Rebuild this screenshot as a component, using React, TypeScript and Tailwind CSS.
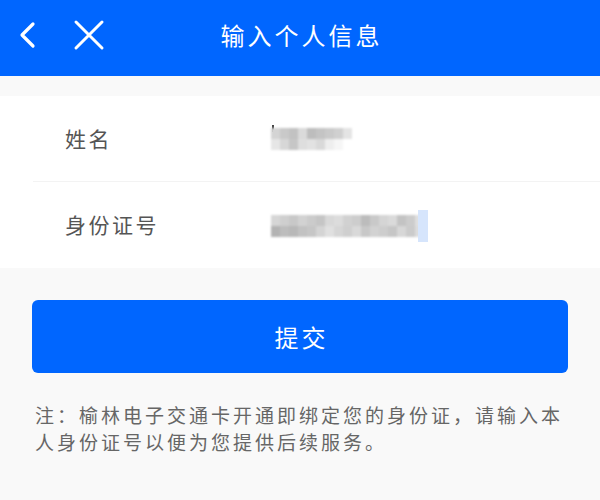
import React from "react";

const FONT = '"Noto Sans CJK SC", "Noto Sans", sans-serif';

const nameTop = ["bg-[#d4d4d4]", "bg-[#c9c9c9]", "bg-[#c2c2c2]", "bg-[#dadada]", "bg-[#bdbdbd]", "bg-[#c4c4c4]", "bg-[#cacaca]", "bg-[#d0d0d0]", "bg-[#e4e4e4]"];
const nameBot = ["bg-[#e6e6e6]", "bg-[#d7d7d7]", "bg-[#c6c6c6]", "bg-[#dedede]", "bg-[#e2e2e2]", "bg-[#d9d9d9]", "bg-[#eeeeee]", "bg-[#f6f6f6]", "bg-white"];

const idTop = ["bg-[#d6d6d6]", "bg-[#cfcfcf]", "bg-[#c8c8c8]", "bg-[#d2d2d2]", "bg-[#cbcbcb]", "bg-[#c5c5c5]", "bg-[#d8d8d8]", "bg-[#dcdcdc]", "bg-[#d1d1d1]", "bg-[#cdcdcd]", "bg-[#bcbcbc]", "bg-[#c9c9c9]", "bg-[#d5d5d5]", "bg-[#dadada]", "bg-[#c3c3c3]", "bg-[#cccccc]", "bg-[#dfdfdf]"];
const idBot = ["bg-[#b3b3b3]", "bg-[#bdbdbd]", "bg-[#b8b8b8]", "bg-[#c2c2c2]", "bg-[#c6c6c6]", "bg-[#d4d4d4]", "bg-[#e0e0e0]", "bg-[#d6d6d6]", "bg-[#cfcfcf]", "bg-[#d9d9d9]", "bg-[#c8c8c8]", "bg-[#d2d2d2]", "bg-[#cdcdcd]", "bg-[#c6c6c6]", "bg-[#d7d7d7]", "bg-[#cbcbcb]", "bg-[#dcdcdc]"];

function Mosaic({ top, bot }: { top: string[]; bot: string[] }) {
  return (
    <div className="flex flex-col blur-[1px]">
      <div className="flex">
        {top.map((c, i) => (
          <div key={i} className={`w-[9px] h-[11px] ${c}`} />
        ))}
      </div>
      <div className="flex">
        {bot.map((c, i) => (
          <div key={i} className={`w-[9px] h-[11px] ${c}`} />
        ))}
      </div>
    </div>
  );
}

export default function App() {
  return (
    <div className="w-[600px] h-[500px] bg-[#f9f9f9] overflow-hidden" style={{ fontFamily: FONT }}>
      <div className="h-[76px] bg-[#0066ff] grid grid-cols-[1fr_auto_1fr] items-center">
        <div className="flex items-center pl-[19px] gap-[36px] pb-[6px]">
          <svg width="18" height="28" viewBox="0 0 18 28" fill="none">
            <path d="M14 3 L3 14 L14 25" stroke="white" strokeWidth="3.2" strokeLinecap="round" strokeLinejoin="round" />
          </svg>
          <svg width="32" height="32" viewBox="0 0 32 32" fill="none">
            <path d="M3 3 L29 29 M29 3 L3 29" stroke="white" strokeWidth="3" strokeLinecap="round" />
          </svg>
        </div>
        <div className="text-white text-[24px] tracking-[3px] pb-[6px] pl-[3px] leading-none">输入个人信息</div>
        <div />
      </div>

      <div className="mt-[20px] bg-white">
        <div className="h-[85px] flex items-center">
          <div className="w-[271px] pl-[65px] text-[21px] tracking-[2.5px] text-[#555555]">姓名</div>
          <div className="relative">
            <div className="absolute left-[1px] -top-[3px] w-[2px] h-[7px] bg-[#444444] blur-[0.4px]" />
            <Mosaic top={nameTop} bot={nameBot} />
          </div>
        </div>
        <div className="ml-[33px] h-px bg-[#f3f3f3]" />
        <div className="h-[86px] flex items-center">
          <div className="w-[271px] pl-[65px] text-[21px] tracking-[2.5px] text-[#555555]">身份证号</div>
          <div className="flex items-center pt-[2px]">
            <Mosaic top={idTop} bot={idBot} />
            <div className="w-[10px] h-[32px] bg-[#d6e5fc] -ml-[6px] blur-[0.5px]" />
          </div>
        </div>
      </div>

      <div className="mx-[32px] mt-[32px] h-[73px] rounded-[6px] bg-[#0066ff] flex items-center justify-center">
        <span className="text-white text-[24px] tracking-[3px] pl-[3px]">提交</span>
      </div>

      <div className="mt-[28px] px-[35px] text-[19px] leading-[27px] tracking-[3px] text-[#666666]">
        <div className="whitespace-nowrap">注：榆林电子交通卡开通即绑定您的身份证，请输入本</div>
        <div className="whitespace-nowrap">人身份证号以便为您提供后续服务。</div>
      </div>
    </div>
  );
}
